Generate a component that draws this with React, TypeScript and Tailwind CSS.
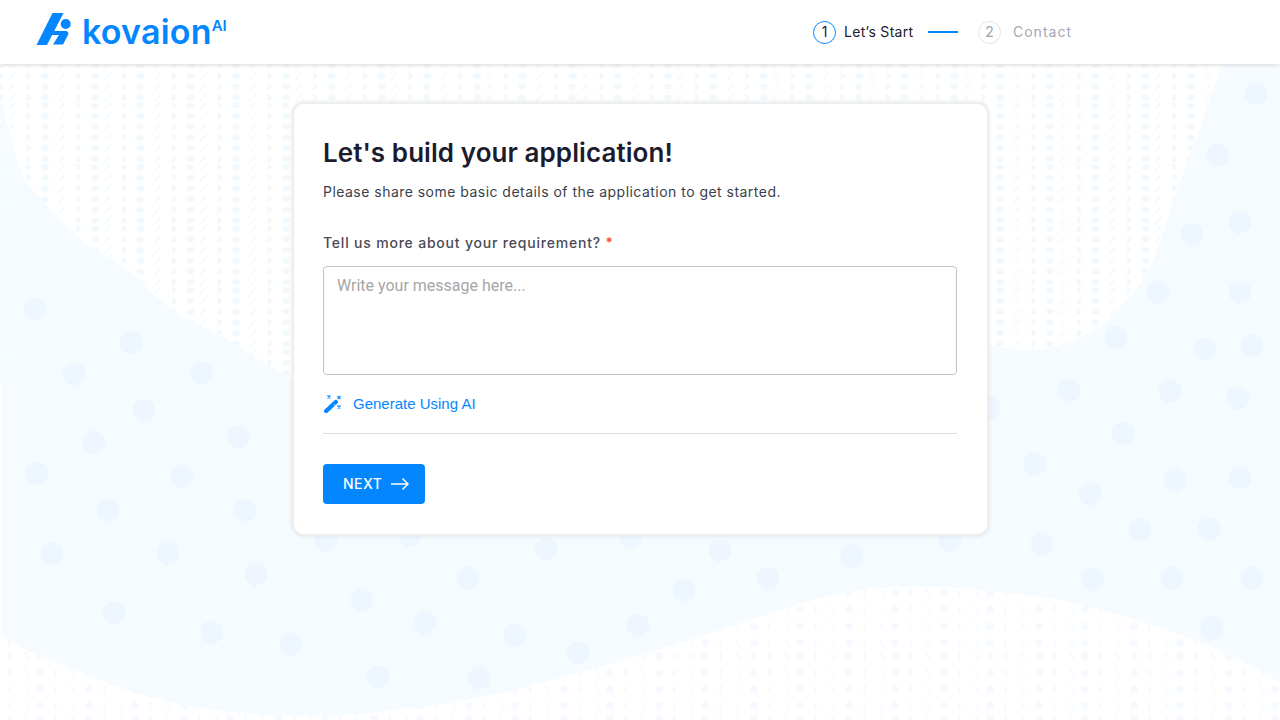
import React from "react";

const bubbles: [number, number][] = [
  [35, 309], [131, 343], [74, 374], [201, 373], [144, 411], [94, 442], [239, 437],
  [37, 473], [182, 476], [108, 511], [245, 511], [52, 553], [168, 553], [256, 574],
  [114, 613], [212, 632], [291, 644], [362, 600], [425, 622], [468, 578], [515, 635],
  [578, 653], [378, 677], [479, 678], [638, 625], [684, 591], [768, 579], [720, 550],
  [546, 549], [631, 537], [326, 540], [410, 535], [852, 556], [950, 540], [1042, 544],
  [1093, 579], [1172, 578], [1252, 578], [1212, 628], [1140, 529], [1209, 529],
  [1090, 494], [1035, 464], [1175, 480], [1240, 477], [1123, 433], [1069, 391],
  [1170, 391], [1238, 398], [989, 408], [1116, 337], [1205, 349], [1252, 345],
  [1158, 292], [1240, 292], [1192, 235], [1240, 222], [1217, 155], [1256, 93],
];

const Background = () => (
  <svg className="absolute inset-0 w-full h-full" viewBox="0 0 1280 720" aria-hidden="true">
    <defs>
      <pattern id="dotsTop" x="7" y="40" width="95.5" height="61.6" patternUnits="userSpaceOnUse">
        {[4, 14.67, 25.33, 36, 46.67, 57.33].map((y) => (
          <g key={y} transform={`translate(0 ${y})`} fill="#f1f9fe" stroke="#f1f9fe">
            <path d="M2 3.5L8 -3" strokeWidth="1.5" fill="none" />
            <path d="M18.5 -3h3l3 3-3 3h-3l1.8-3z" stroke="none" />
            <ellipse cx="38" cy="0" rx="4" ry="3" stroke="none" />
            <path d="M52 3.5L58 -3" strokeWidth="1.5" fill="none" />
            <path d="M68.5 -3h3l3 3-3 3h-3l1.8-3z" stroke="none" />
            <ellipse cx="88" cy="0" rx="4" ry="3" stroke="none" />
          </g>
        ))}
      </pattern>
      <pattern id="dotsBottom" x="5" y="588" width="95" height="63" patternUnits="userSpaceOnUse">
        {[5, 21.6, 38.2, 54.8].map((y) => (
          <g key={y} transform={`translate(0 ${y})`} fill="#f4faff" stroke="#f4faff">
            <path d="M6.5 -4L5 0l1.5 4H4.5L2.5 0l2-4z" stroke="none" />
            <path d="M19.5 -4L24.5 4" strokeWidth="1.6" fill="none" />
            <circle cx="35" cy="0" r="3.8" stroke="none" />
            <path d="M52.5 -4L51 0l1.5 4H50.5L48.5 0l2-4z" stroke="none" />
            <path d="M65.5 -4L70.5 4" strokeWidth="1.6" fill="none" />
            <circle cx="84" cy="0" r="3.8" stroke="none" />
          </g>
        ))}
      </pattern>
    </defs>
    <rect x="0" y="65" width="1230" height="320" fill="url(#dotsTop)" />
    <rect x="0" y="585" width="1280" height="135" fill="url(#dotsBottom)" />
    <path
      d="M1 97C8 130 16 165 27 183C50 210 68 228 90 247C108 258 120 264 133 273C150 290 165 308 183 317C200 325 215 332 233 343C255 357 272 367 293 380C340 350 500 340 700 345C800 345 900 345 987 345C1000 348 1015 350 1030 350C1048 350 1065 345 1080 337C1095 330 1110 320 1120 307C1132 295 1140 285 1147 273C1157 255 1163 232 1170 210C1178 188 1185 168 1193 147C1203 122 1213 92 1222 65L1280 65L1280 682C1265 673 1250 665 1233 657C1212 647 1190 638 1167 630C1145 622 1122 616 1100 610C1065 600 1035 595 1000 592C965 588 935 586 900 587C860 588 820 596 780 610C690 640 600 670 500 693C470 700 440 704 410 708C375 713 340 716 300 716C265 716 232 713 200 708C178 704 155 699 133 692C112 685 91 677 70 668C57 662 45 659 33 653C22 647 11 642 1 635Z"
      fill="#f5fbff"
    />
    {bubbles.map(([x, y]) => (
      <path
        key={`${x}-${y}`}
        transform={`translate(${x} ${y})`}
        d="M0 -11.5C6.4 -11.5 11.5 -6.4 11.5 0C11.5 6 7 11 1 11.5L-4 13L-3.5 11C-8 9.6 -11.5 5 -11.5 0C-11.5 -6.4 -6.4 -11.5 0 -11.5Z"
        fill="#eef7ff"
      />
    ))}
  </svg>
);

const Logo = () => (
  <div className="flex items-start h-[42px]">
    <svg width="46" height="34" viewBox="0 0 46 34" fill="#0486ff" className="mt-[2px]">
      <path d="M0.5 32L16.5 0H27.5L11 32Z" />
      <circle cx="29.7" cy="11" r="5" />
      <path d="M16 18H29C32 18 33 20 32 22L27 31.5H17L23 22H14Z" />
    </svg>
    <span className="mt-[1px] text-[34px] leading-[40px] font-semibold text-[#0486ff] tracking-[0.2px]">
      kovaion
    </span>
    <span className="mt-[6px] text-[15px] leading-[18px] font-semibold text-[#0486ff]">AI</span>
  </div>
);

const Stepper = () => (
  <div className="flex items-center text-sm">
    <span className="flex items-center justify-center w-[23px] h-[23px] rounded-full border border-[#0486ff] text-[#1c1c2e]">
      1
    </span>
    <span className="ml-2 w-[69px] whitespace-nowrap tracking-[0.3px] text-[#1c1c2e]">Let’s Start</span>
    <span className="ml-[15px] w-[30px] h-[2px] bg-[#0486ff]" />
    <span className="ml-5 flex items-center justify-center w-[23px] h-[23px] rounded-full border border-[#e2e4e8] text-[#9ca3af]">
      2
    </span>
    <span className="ml-3 w-[59px] whitespace-nowrap tracking-[1px] text-[#a3a7b5]">Contact</span>
  </div>
);

const WandIcon = () => (
  <svg width="20" height="20" viewBox="0 0 20 20" fill="#0486ff">
    <path d="M3.2 17L12.8 8" stroke="#0486ff" strokeWidth="4.4" strokeLinecap="round" />
    <path d="M10.6 10L12.4 11.8" stroke="#ffffff" strokeWidth="0.8" />
    <path
      d="M4.5 1.5L7.5 4.5M7.5 1.5L4.5 4.5M14.5 2L17.5 5M17.5 2L14.5 5M14.5 11.5L17.5 14.5M17.5 11.5L14.5 14.5"
      stroke="#0486ff"
      strokeWidth="1.2"
      fill="none"
    />
  </svg>
);

const ArrowIcon = () => (
  <svg width="18" height="14" viewBox="0 0 18 14" fill="none" stroke="currentColor" strokeWidth="1.5">
    <path d="M0 7H17M11.5 1.5L17 7L11.5 12.5" />
  </svg>
);

export default function App() {
  return (
    <div className="relative w-[1280px] h-[720px] overflow-hidden bg-white font-['Inter',sans-serif]">
      <Background />
      <header className="relative z-10 flex h-16 items-center justify-between bg-white pl-9 pr-[208px] shadow-[0_1px_4px_rgba(0,0,0,0.16)]">
        <Logo />
        <Stepper />
      </header>
      <main className="relative pl-[292px] pt-[38px]">
        <div className="w-[697px] h-[434px] rounded-xl border-2 border-[#eeeeee] bg-white pl-[29px] pr-[30px] pt-[29px] shadow-[0_0_4px_rgba(0,0,0,0.1)]">
          <h1 className="text-[26px] leading-[40px] font-semibold tracking-[0.07px] text-[#1c1c2e]">
            Let's build your application!
          </h1>
          <p className="mt-[9px] text-sm leading-[20px] tracking-[0.47px] text-[#3b3f4c]">
            Please share some basic details of the application to get started.
          </p>
          <label className="mt-[30px] block text-sm leading-[21px] font-medium tracking-[0.8px] text-[#4a4a55]">
            Tell us more about your requirement? <span className="text-[#ff4040]">*</span>
          </label>
          <textarea
            className="mt-[13px] block w-full h-[109px] resize-none rounded border border-[#c4c4c4] bg-white px-[13px] py-[8px] text-base leading-[22px] font-['Roboto',sans-serif] placeholder:text-[#a6a6a6] outline-none"
            placeholder="Write your message here..."
          />
          <div className="mt-[19px] flex items-center h-[20px]">
            <WandIcon />
            <span className="ml-[10px] text-[15px] font-['Liberation_Sans',sans-serif] text-[#0486ff]">
              Generate Using AI
            </span>
          </div>
          <div className="mt-[19px] h-px bg-[#dcdcdc]" />
          <button className="mt-[30px] flex items-center gap-[9px] w-[102px] h-10 rounded bg-[#0486ff] pl-5 text-sm font-medium tracking-[0.5px] text-white">
            NEXT
            <ArrowIcon />
          </button>
        </div>
      </main>
    </div>
  );
}
